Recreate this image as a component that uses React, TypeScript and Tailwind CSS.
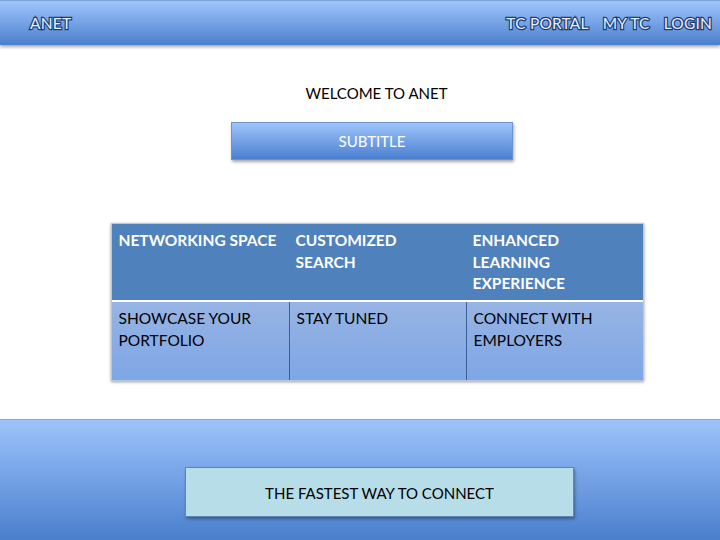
import React from "react";

const font = { fontFamily: "Lato, 'Open Sans', sans-serif" };

function NavText({ children }: { children: React.ReactNode }) {
  return (
    <span className="text-[15.5px] leading-none text-[#e6efff] [-webkit-text-stroke:2.5px_#1c3d78] [paint-order:stroke_fill] tracking-[0.2px]">
      {children}
    </span>
  );
}

export default function App() {
  const heads = ["NETWORKING SPACE", "CUSTOMIZED SEARCH", "ENHANCED LEARNING EXPERIENCE"];
  const body = ["SHOWCASE YOUR PORTFOLIO", "STAY TUNED", "CONNECT WITH EMPLOYERS"];
  return (
    <div className="w-[720px] h-[540px] bg-white flex flex-col overflow-hidden" style={font}>
      <header className="h-[45px] shrink-0 flex items-center justify-between pl-[30px] pr-[8px] pt-[1px] bg-gradient-to-b from-[#a0c6fc] to-[#4a7fcd] border-t border-[#7ea3d8] shadow-[0_2px_3px_rgba(0,0,0,0.35)] relative z-10">
        <NavText>ANET</NavText>
        <nav className="flex items-center gap-[14px]">
          <NavText>TC PORTAL</NavText>
          <NavText>MY TC</NavText>
          <NavText>LOGIN</NavText>
        </nav>
      </header>

      <main className="flex-1 flex flex-col items-center">
        <h1 className="mt-[39px] pl-[33px] text-[15px] leading-[18px] text-black">WELCOME TO ANET</h1>
        <div className="mt-[20px] ml-[24px] w-[282px] h-[38px] flex items-center justify-center text-[15px] text-white bg-gradient-to-b from-[#9ec4fb] to-[#4b80cf] border border-[#6f94cb] shadow-[1px_2px_3px_rgba(0,0,0,0.35)]">
          SUBTITLE
        </div>

        <div className="mt-[63px] ml-[34px] w-[533px] shadow-[0_1px_3px_rgba(0,0,0,0.4)] border border-[#b8c8e0]">
          <div className="grid grid-cols-3 h-[76px] bg-[#4f81bd]">
            {heads.map((h, i) => (
              <div
                key={h}
                className={`pl-[7px] pr-[14px] pt-[6px] text-[15.5px] leading-[21.5px] font-bold text-white ${i === 0 ? "whitespace-nowrap" : ""}`}
              >
                {h}
              </div>
            ))}
          </div>
          <div className="h-[2px] bg-white" />
          <div className="grid grid-cols-3 h-[78px] bg-gradient-to-b from-[#97b4e3] to-[#7ea6e6]">
            {body.map((b, i) => (
              <div
                key={b}
                className={`pl-[7px] pr-[12px] pt-[6px] text-[15.5px] leading-[21.5px] text-black ${i > 0 ? "border-l border-[#3d5f96]" : ""}`}
              >
                {b}
              </div>
            ))}
          </div>
        </div>
      </main>

      <footer className="h-[121px] shrink-0 flex justify-center pt-[47px] bg-gradient-to-b from-[#9dc3fb] to-[#4a7fcd] border-t border-[#8aaad6]">
        <div className="w-[389px] h-[50px] ml-[39px] pt-[3px] flex items-center justify-center text-[15px] text-black bg-[#b7dde8] border border-[#5f86b8] shadow-[1px_2px_3px_rgba(0,0,0,0.35)]">
          THE FASTEST WAY TO CONNECT
        </div>
      </footer>
    </div>
  );
}
